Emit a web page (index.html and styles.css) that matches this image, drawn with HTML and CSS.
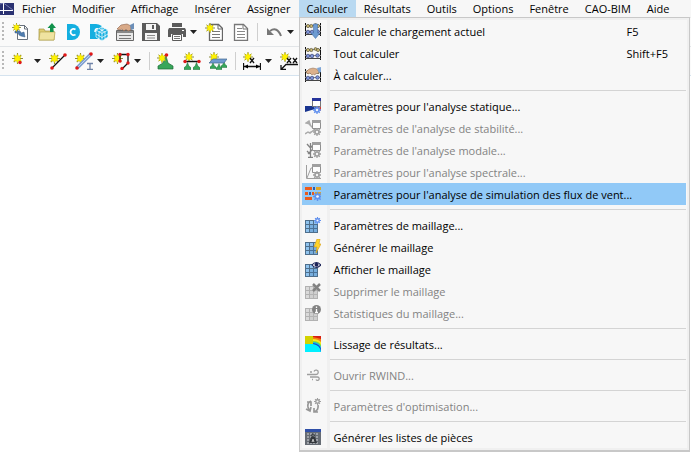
FILE: index.html
```html
<!DOCTYPE html>
<html lang="fr">
  <head>
    <meta charset="utf-8">
    <title>Calculer</title>
    <link rel="stylesheet" href="styles.css">
  </head>
  <body>
    <svg class="defs" width="0" height="0" aria-hidden="true">
      <defs>
        <symbol id="star" viewBox="0 0 12 12">
          <path d="M6 0v12M0 6h12M2 2l8 8M10 2l-8 8" stroke="#8c8a3a" stroke-width="1.2"/>
          <path d="M6 1l1.3 2.6L10 3 8.8 6 10 9 7.300 8.400 6 11 4.700 8.400 2 9 3.200 6 2 3l2.700.6z" fill="#fff200" stroke="#cfc200" stroke-width=".5"/>
        </symbol>
        <symbol id="grid" viewBox="0 0 13 13">
          <path d="M0 0h13v13H0z" fill="#4f6f8c"/>
          <path d="M1 1h3v3H1zM5 1h3v3H5zM9 1h3v3H9zM1 5h3v3H1zM5 5h3v3H5zM9 5h3v3H9zM1 9h3v3H1zM5 9h3v3H5zM9 9h3v3H9z" fill="#8fc3ee"/>
          <path d="M5 5h7v7H5z" fill="#3f79b5" opacity=".3"/>
        </symbol>
        <symbol id="gear" viewBox="0 0 10 10">
          <path d="M5 0v10M0 5h10M1.500 1.500l7 7M8.500 1.500l-7 7" stroke="currentColor" stroke-width="1.600"/>
          <circle cx="5" cy="5" r="3.400" fill="currentColor"/>
          <circle cx="5" cy="5" r="1.500" fill="#f4f7fc"/>
        </symbol>
        <symbol id="abacus" viewBox="0 0 16 13">
          <path d="M.5 0v13M15.500 0v13" stroke="#111"/>
          <path d="M0 2.500h16M0 8.500h16" stroke="#888"/>
          <path d="M0 11.500h16" stroke="#444"/>
          <g fill="#cdbb72" stroke="#55503a" stroke-width=".7"><circle cx="3" cy="3" r="1.600"/><circle cx="6.300" cy="3" r="1.600"/><circle cx="13" cy="3" r="1.600"/><circle cx="10.500" cy="2" r="1.400"/></g>
          <g fill="#7d93d8" stroke="#343f75" stroke-width=".7"><circle cx="3" cy="9" r="1.800"/><circle cx="7" cy="9" r="1.800"/><circle cx="12.500" cy="8.500" r="1.800"/></g>
        </symbol>
        <symbol id="window" viewBox="0 0 9 9">
          <path d="M.5.5h8v8h-8z" fill="#fff" stroke="#777"/>
          <path d="M0 0h9v3H0z" fill="currentColor"/>
        </symbol>
        <symbol id="support" viewBox="0 0 8 8">
          <path d="M4 0l1.500 4L8 6v2H0V6l2.500-2z" fill="#37a65a" stroke="#1c6b38" stroke-width=".6"/>
        </symbol>
      </defs>
    </svg>

    <header>
      <nav class="menubar">
        <svg class="app-logo" viewBox="0 0 14 12"><path d="M0 0h14v12H0z" fill="#2b3272"/><path d="M0 7.500h13M3.500 0v11" fill="none" stroke="#fff"/><path d="M0 1l3.500-1L13 7" fill="none" stroke="#aab0dc" stroke-width=".6"/></svg>
        <button>Fichier</button>
        <button>Modifier</button>
        <button>Affichage</button>
        <button>Insérer</button>
        <button>Assigner</button>
        <div class="menu-item">
          <button class="open" aria-expanded="true">Calculer</button>
          <div class="dropdown">
            <button class="entry">
              <svg viewBox="0 0 16 16"><use href="#abacus" width="16" height="13"/><path d="M8.500 1h4v9H15l-4.500 5.500L6 10h2.500z" fill="#6d9bd2" stroke="#4773ab" stroke-width=".6"/></svg>
              <span>Calculer le chargement actuel</span><kbd>F5</kbd>
            </button>
            <button class="entry">
              <svg viewBox="0 0 16 16"><use href="#abacus" y="2" width="16" height="13"/></svg>
              <span>Tout calculer</span><kbd>Shift+F5</kbd>
            </button>
            <button class="entry">
              <svg viewBox="0 0 16 16"><use href="#abacus" y="2" width="16" height="13"/><path d="M1 5l3-3 4-1 4 1 2 3-2 2-1-1-1 2-2-1-1 1-2-2-2 1z" fill="#dbb08c" stroke="#8b6a50" stroke-width=".5"/><path d="M12 1l4-1v5l-2 1z" fill="#7da5d6"/></svg>
              <span>À calculer...</span>
            </button>
            <hr>
            <button class="entry">
              <svg viewBox="0 0 16 16"><path d="M0 8h16v3h-6L0 14z" fill="#18348f"/><path d="M9 8h7v5z" fill="#d33a2c"/><use class="navy" href="#window" x="7" width="9" height="9"/><use class="blue" href="#gear" x="8" y="8" width="8" height="8"/></svg>
              <span>Paramètres pour l'analyse statique...</span>
            </button>
            <button class="entry" disabled>
              <svg viewBox="0 0 16 16"><path d="M1 3l3-2 1 3zM3 3l8 8M0 14l3-2 2 1 4-3" fill="#999" stroke="#999" stroke-width="1.500"/><use href="#window" x="7" width="9" height="9"/><use href="#gear" x="8" y="8" width="8" height="8"/></svg>
              <span>Paramètres de l'analyse de stabilité...</span>
            </button>
            <button class="entry" disabled>
              <svg viewBox="0 0 16 16"><path d="M5.500 1v14M3 15.500h5M2 2l3.500 4L8 3M3 12l5-5M2 9l3 3" fill="none" stroke="#666" stroke-width="1.300"/><use href="#window" x="7" width="9" height="9"/><use href="#gear" x="8" y="8" width="8" height="8"/></svg>
              <span>Paramètres de l'analyse modale...</span>
            </button>
            <button class="entry" disabled>
              <svg viewBox="0 0 16 16"><path d="M1.500 1v13.500H16M2 14L6 4h3" fill="none" stroke="#888"/><use href="#window" x="7" width="9" height="9"/><use href="#gear" x="8" y="7" width="8" height="8"/></svg>
              <span>Paramètres pour l'analyse spectrale...</span>
            </button>
            <button class="entry selected">
              <svg viewBox="0 0 16 16"><path d="M0 1h7v3H0zM0 6h3v3H0zM0 11h7v3H0z" fill="#ea5b1c"/><path d="M8 1h2v3H8zM4 6h2v3H4z" fill="#2a5fae"/><path d="M7 6h2v3H7z" fill="#ea5b1c"/><path d="M11 1h5v3h-5zM10 6h6v3h-6z" fill="#e0a526"/><use class="blue" href="#gear" x="8" y="6" width="9" height="9"/></svg>
              <span>Paramètres pour l'analyse de simulation des flux de vent...</span>
            </button>
            <hr>
            <button class="entry">
              <svg viewBox="0 0 16 16"><use href="#grid" y="3" width="13" height="13"/><use class="blue" href="#gear" x="9" width="7" height="7"/></svg>
              <span>Paramètres de maillage...</span>
            </button>
            <button class="entry">
              <svg viewBox="0 0 16 16"><use href="#grid" y="3" width="13" height="13"/><path d="M12 0h3l-1 5h2l-5 9 1-6H9z" fill="#ffd42a" stroke="#d59c14" stroke-width=".6"/></svg>
              <span>Générer le maillage</span>
            </button>
            <button class="entry">
              <svg viewBox="0 0 16 16"><use href="#grid" y="3" width="13" height="13"/><path d="M7 4q4-5 9 0-5 5-9 0z" fill="#fff" stroke="#1b2257" stroke-width="1.200"/><circle cx="11.500" cy="3.800" r="2" fill="#1b2257"/></svg>
              <span>Afficher le maillage</span>
            </button>
            <button class="entry" disabled>
              <svg viewBox="0 0 16 16"><use class="faded" href="#grid" y="3" width="13" height="13"/><path d="M8 1l7 7M15 1L8 8" stroke="#666" stroke-width="2.500"/></svg>
              <span>Supprimer le maillage</span>
            </button>
            <button class="entry" disabled>
              <svg viewBox="0 0 16 16"><use class="faded" href="#grid" y="3" width="13" height="13"/><circle cx="11.500" cy="4.500" r="4.500" fill="#666"/><path d="M11.500 1.500v1.500M11.500 4v4M10 7.500h3" stroke="#fff" stroke-width="1.300"/></svg>
              <span>Statistiques du maillage...</span>
            </button>
            <hr>
            <button class="entry">
              <svg viewBox="0 0 16 16"><path d="M0 0h8v8H0z" fill="#d3d200"/><path d="M0 8h16v8H0z" fill="#00f0ff"/><path d="M8 0h8v16q-1-7-8-8z" fill="#1747d0"/><path d="M8 0h8v13q-1-5-8-6z" fill="#18bfe8"/><path d="M8 0h8v11q-2-5-8-5z" fill="#7fe03a"/><path d="M8 0h8v9q-2-4-8-4z" fill="#f8e71c"/><path d="M8 0h8v6q-3-3-8-3z" fill="#f57c14"/><path d="M8 0h8v3q-3-1-8-2z" fill="#d81e12"/></svg>
              <span>Lissage de résultats...</span>
            </button>
            <hr>
            <button class="entry" disabled>
              <svg viewBox="0 0 16 16"><path d="M2 7.500h9a2.200 2.200 0 1 0-2-3M5 10h7.500a1.700 1.700 0 1 1-1.500 2.500M5 5h2M7 12.500h1" fill="none" stroke="#888" stroke-width="1.300"/></svg>
              <span>Ouvrir RWIND...</span>
            </button>
            <hr>
            <button class="entry" disabled>
              <svg viewBox="0 0 16 16"><path d="M6 3Q2 5 3 9l1 3M1 11l4 2 1-4M2 4h4v4M9 14q5-2 4-7M9 10v4h4" fill="none" stroke="#808080" stroke-width="1.700"/><use href="#gear" x="9" y="0" width="7" height="7"/></svg>
              <span>Paramètres d'optimisation...</span>
            </button>
            <hr>
            <button class="entry">
              <svg viewBox="0 0 16 16"><path d="M0 0h16v16H0z" fill="#666c74"/><path d="M0 0h16v3H0z" fill="#3050a8"/><path d="M2 5h12M2 8h12M2 11h12M2 14h12" stroke="#d5d8dc" stroke-dasharray="2 1"/><path d="M4 14l2-6h4l2 6z" fill="#33373c"/><circle cx="8" cy="6.500" r="1.500" fill="none" stroke="#33373c"/><path d="M7 13l1-3 1 3M7 12h2" fill="none" stroke="#ddd" stroke-width=".7"/></svg>
              <span>Générer les listes de pièces</span>
            </button>
          </div>
        </div>
        <button>Résultats</button>
        <button>Outils</button>
        <button>Options</button>
        <button>Fenêtre</button>
        <button>CAO-BIM</button>
        <button>Aide</button>
      </nav>

      <div class="toolbar">
        <i class="handle"></i>
        <button class="tool" aria-label="Nouveau"><svg viewBox="0 0 18 18"><path d="M5.500 2.500h7l3 3v11h-10z" fill="#fff" stroke="#68717c"/><path d="M12.500 2v4H16" fill="none" stroke="#68717c"/><path d="M3 8q6-1 6 2l3-1 1 5-4-1q-2 0-3-3H3z" fill="#4f7db0" stroke="#355a85" stroke-width=".5"/><use href="#star" width="9" height="9"/></svg></button>
        <button class="tool" aria-label="Ouvrir"><svg viewBox="0 0 18 18"><path d="M1 17V6h5l1 2h9v9z" fill="#dfcd71" stroke="#a59542" stroke-width=".7"/><path d="M1 17l1-8h15l-1 8z" fill="#efe3a0" stroke="#b8a652" stroke-width=".7"/><path d="M12 9V5H9.500L14 0l4 5h-2.500v4z" fill="#12924c"/></svg></button>
        <button class="tool" aria-label="Dlubal Center"><svg viewBox="0 0 18 18"><path d="M3 1h5a8 8 0 0 1 0 16H3z" fill="#14afe0"/><path d="M11.500 6.500Q10 5.500 8.500 6 6.500 7 6.500 9t2 3q1.500.5 3-.5" fill="none" stroke="#fff" stroke-width="1.800"/></svg></button>
        <button class="tool" aria-label="Blocs"><svg viewBox="0 0 18 18"><path d="M0 1h6q6 0 7 6l-5 9H0z" fill="#14afe0"/><path d="M8 6q-3-1-3 3" fill="none" stroke="#fff" stroke-width="1.500"/><path d="M12 4l6 3v7l-6 4-6-4V7z" fill="#14afe0"/><path d="M12 4l6 3v7l-6 4-6-4V7zl0 14M6 7l6 3.500L18 7M6 11l6 3.500 6-3.500M9 5.500l6 3.500v7M15 5.500L9 9v7" fill="none" stroke="#fff" stroke-width=".7"/></svg></button>
        <button class="tool" aria-label="Gestionnaire de modèles"><svg viewBox="0 0 18 18"><path d="M.5 7.500h17v10H.5z" fill="#e8e8e8" stroke="#666"/><path d="M1 8h16v2H1z" fill="#888"/><path d="M3 12.500h12M3 15.500h12" stroke="#777"/><path d="M1 6l4-4 6-1 4 2v4l-3 1-2-2-2 2-2-2-2 1z" fill="#d9aa88" stroke="#8a6048" stroke-width=".6"/><path d="M14 2l4-2v6l-3 1z" fill="#6c8fb8"/></svg></button>
        <button class="tool" aria-label="Enregistrer"><svg viewBox="0 0 18 18"><path d="M0 0h15l3 3v15H0z" fill="#5b5b5b"/><path d="M4 1h10v6H4zM3 10h12v7H3z" fill="#f5f5f5"/><path d="M10 2h2v4h-2z" fill="#5b5b5b"/><path d="M5 12.500h8M5 15h8" stroke="#8a8a8a"/></svg></button>
        <button class="tool" aria-label="Imprimer"><svg viewBox="0 0 18 18"><path d="M4 0h10v4H4zM1 5h16l1 2v7h-3v-3H3v3H0V7z" fill="#5b5b5b"/><path d="M4.500 11.500h9v6h-9z" fill="#fff" stroke="#5b5b5b"/><path d="M6 13.500h6M6 15.500h6" stroke="#777"/><path d="M14 7h2v1h-2z" fill="#fff"/></svg></button>
        <button class="arrow" aria-label="Options d'impression"></button>
        <button class="tool" aria-label="Nouveau rapport"><svg viewBox="0 0 18 18"><path d="M4.500 1.500h9l4 4v12h-13z" fill="#fff" stroke="#666" stroke-width="1.300"/><path d="M13 1v5h5" fill="none" stroke="#666"/><path d="M7 8.500h8M7 11.500h8M7 14.500h8" stroke="#777"/><use href="#star" width="10" height="10"/></svg></button>
        <button class="tool" aria-label="Rapport"><svg viewBox="0 0 18 18"><path d="M3.500 1.500h9l4 4v12h-13z" fill="#fff" stroke="#777" stroke-width="1.300"/><path d="M12 1v5h5" fill="none" stroke="#777"/><path d="M6 5.500h5M6 8.500h8M6 11.500h8M6 14.500h8" stroke="#888"/></svg></button>
        <i class="divider"></i>
        <button class="tool" aria-label="Annuler"><svg viewBox="0 0 18 18"><path d="M5 8q7-5 11 5" fill="none" stroke="#777" stroke-width="2"/><path d="M2 5v7h7z" fill="#777"/></svg></button>
        <button class="arrow" aria-label="Historique"></button>
      </div>

      <div class="toolbar">
        <i class="handle"></i>
        <button class="tool" aria-label="Nœud"><svg viewBox="0 0 18 18"><use href="#star" y="1" width="11" height="11"/><circle cx="8" cy="10.500" r="1.700" fill="#e01818"/></svg></button>
        <button class="arrow" aria-label="Types de nœud"></button>
        <button class="tool" aria-label="Ligne"><svg viewBox="0 0 18 18"><use href="#star" y="1" width="11" height="11"/><path d="M3 16L16 3" stroke="#111" stroke-width="1.300"/><circle cx="3" cy="16" r="1.800" fill="#e01818"/><circle cx="16" cy="3" r="1.800" fill="#e01818"/></svg></button>
        <button class="tool" aria-label="Barre"><svg viewBox="0 0 18 18"><use href="#star" y="1" width="11" height="11"/><path d="M2 16L16 2" stroke="#7f9fd0" stroke-width="3.500"/><path d="M2 16L16 2" stroke="#bcd0ee"/><circle cx="2" cy="16" r="1.800" fill="#e01818"/><circle cx="16" cy="2" r="1.800" fill="#e01818"/><path d="M12 11.500h6M12 17.500h6M15 11v6" stroke="#6f83a8" stroke-width="1.300"/></svg></button>
        <button class="arrow" aria-label="Types de barre"></button>
        <button class="tool" aria-label="Polyligne"><svg viewBox="0 0 18 18"><use href="#star" y="1" width="11" height="11"/><path d="M8 9V2.500h8V11l-6 6" fill="none" stroke="#111" stroke-width="1.300"/><g fill="#e01818"><circle cx="8" cy="2.500" r="1.700"/><circle cx="16" cy="2.500" r="1.700"/><circle cx="8" cy="9" r="1.700"/><circle cx="16" cy="11" r="1.700"/><circle cx="10" cy="16.500" r="1.700"/></g></svg></button>
        <button class="arrow" aria-label="Types de ligne"></button>
        <i class="divider"></i>
        <button class="tool" aria-label="Appui nodal"><svg viewBox="0 0 18 18"><path d="M9 4l2 7 5 3v3H1v-3l5-3z" fill="#37a65a" stroke="#1c6b38" stroke-width=".7"/><use href="#star" y="1" width="10" height="10"/><circle cx="9.500" cy="3" r="1.800" fill="#e01818"/></svg></button>
        <button class="tool" aria-label="Appui linéique"><svg viewBox="0 0 18 18"><use href="#support" x="1" y="10" width="7" height="8"/><use href="#support" x="10" y="10" width="7" height="8"/><use href="#star" x="1" width="10" height="10"/><path d="M2 9.500h14" stroke="#111" stroke-width="1.500"/><circle cx="2" cy="9.500" r="1.700" fill="#e01818"/><circle cx="16" cy="9.500" r="1.700" fill="#e01818"/></svg></button>
        <button class="tool" aria-label="Appui surfacique"><svg viewBox="0 0 18 18"><use href="#support" x="1" y="10" width="6" height="7"/><use href="#support" x="7" y="11" width="6" height="7"/><use href="#support" x="12" y="9" width="6" height="7"/><use href="#star" width="10" height="10"/><path d="M4 7h14l-3 4H0z" fill="#6f9bd0" stroke="#44688f" stroke-width=".7"/></svg></button>
        <i class="divider"></i>
        <button class="tool" aria-label="Cote"><svg viewBox="0 0 18 18"><use href="#star" width="10" height="10"/><path d="M.5 11v7M17.500 11v7M1 14.500h16M7 6l4 5M11 6l-4 5" stroke="#111" stroke-width="1.300"/><path d="M1 14.500l4-2v4zM17 14.500l-4-2v4z"/></svg></button>
        <button class="arrow" aria-label="Types de cote"></button>
        <button class="tool" aria-label="Annotation"><svg viewBox="0 0 18 18"><use href="#star" width="10" height="10"/><path d="M7 6l4 5M11 6l-4 5M13 6l4 5M17 6l-4 5M18 12.500H6l-5 5M1 13v4.500h5" fill="none" stroke="#111" stroke-width="1.300"/></svg></button>
      </div>
    </header>

    <main></main>
  </body>
</html>
```
FILE: styles.css
```css
* { box-sizing: border-box; }
body { margin: 0; min-height: 100vh; display: flex; flex-direction: column; background: #fff; font-family: "Open Sans", "Noto Sans", sans-serif; font-size: 11px; color: #000; overflow: hidden; }
button { font: inherit; color: inherit; background: none; border: 0; padding: 0; margin: 0; }
.defs { position: absolute; }
main { flex: 1; }

.menubar { display: flex; height: 18px; background: #f7f7f7; border-bottom: 1px solid #ececec; }
.menubar > button, .open { height: 17px; padding: 0 8px; line-height: 17px; white-space: nowrap; }
.app-logo { width: 14px; height: 12px; margin-top: 3px; flex: none; }
.menu-item { position: relative; }
.open { background: #b9d9f1; }

.dropdown { position: absolute; z-index: 1; top: 100%; left: 0; min-width: 391px; padding: 2px 3px 2px 2px; background: #f7f7f7; border: 1px solid #c8c8c8; border-width: 1px 1px 2px; box-shadow: inset 0 0 0 2px #f0f0f0; }
.entry { display: grid; grid-template-columns: 28px 1fr 59px; align-items: center; width: 100%; height: 22px; text-align: left; white-space: nowrap; background: linear-gradient(to right, transparent 25px, #f0f0f0 25px, #f0f0f0 28px, transparent 28px); }
.entry svg { width: 16px; height: 16px; margin-left: 3px; }
.entry span { padding-left: 4px; }
.entry kbd { font: inherit; }
.entry:disabled { color: #838383; }
.entry:disabled svg { filter: grayscale(1); opacity: 0.8; }
.entry.selected { background: #91c9f7; }
.selected span { margin-right: -59px; }
.dropdown hr { height: 9px; margin: 0; border: 0; border-left: 3px solid #f0f0f0; margin-left: 25px; background: linear-gradient(#d4d4d4, #d4d4d4) 0 4px / 100% 1px no-repeat; background-origin: padding-box; background-clip: padding-box; }

.navy { color: #26349b; }
.blue { color: #6291ee; }
.entry:disabled use { color: #8a8a8a; }
.faded { opacity: 0.6; }

.toolbar { display: flex; align-items: center; height: 29px; background: #fafafa; border-bottom: 1px solid #e2e5e8; }
.toolbar:last-child { border-color: #d5e3ef; }
.handle { width: 2px; height: 20px; margin: 0 4px 0 2px; background: repeating-linear-gradient(#b8b8b8 0 2px, transparent 2px 4px); }
.tool { width: 26px; height: 26px; flex: none; }
.tool svg { display: block; width: 18px; height: 18px; margin: 0 auto; }
.arrow { width: 11px; height: 20px; flex: none; display: flex; align-items: center; }
.arrow::before { content: ""; width: 7px; height: 4px; background: #222; clip-path: polygon(0 0, 100% 0, 50% 100%); }
.divider { width: 1px; height: 18px; margin: 0 3px 0 4px; background: #cfcfcf; }
```
